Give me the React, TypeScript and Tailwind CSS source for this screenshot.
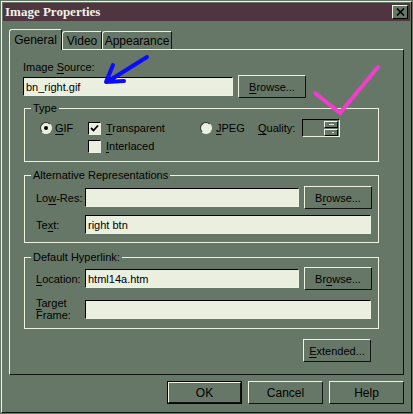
import React from 'react';

// Classic dialog palette
const LIGHT = 'border-[#eef2e0]';

function Btn({ children, w = 'w-[68px]', h = 'h-[23px]', def = false }: { children: React.ReactNode; w?: string; h?: string; def?: boolean }) {
	const inner = (
		<div className={`flex h-full w-full items-center justify-center border-t border-l ${LIGHT} border-r border-b border-r-[#101410] border-b-[#101410]`}>
			{children}
		</div>
	);
	if (def) {
		return <div className={`${w} ${h} border border-black`}>{inner}</div>;
	}
	return <div className={`${w} ${h}`}>{inner}</div>;
}

function Field({ value = '', w }: { value?: string; w: string }) {
	return (
		<div className={`${w} h-[19px] flex items-center bg-[#ebefdf] border-t border-l border-t-black border-l-black border-r border-b ${LIGHT} pl-[2px]`}>
			{value}
		</div>
	);
}

function Radio({ on = false }: { on?: boolean }) {
	return (
		<div className="w-[12px] h-[12px] rounded-full border border-t-[#2a322a] border-l-[#2a322a] border-r-[#eef2e0] border-b-[#eef2e0] bg-[#ebefdf] flex items-center justify-center">
			{on && <div className="w-[4px] h-[4px] rounded-full bg-black" />}
		</div>
	);
}

function Check({ on = false }: { on?: boolean }) {
	return (
		<div className="w-[13px] h-[13px] border-t border-l border-t-black border-l-black border-r border-b border-r-[#eef2e0] border-b-[#eef2e0] bg-[#ebefdf] flex items-center justify-center">
			{on && (
				<svg width="9" height="9" viewBox="0 0 9 9">
					<path d="M1 4 L3.5 6.5 L8 1.5" stroke="#000" strokeWidth="1.8" fill="none" />
				</svg>
			)}
		</div>
	);
}

function U({ children }: { children: React.ReactNode }) {
	return <span className="underline underline-offset-[2px]">{children}</span>;
}

function Group({ title, h, children }: { title: string; h: string; children: React.ReactNode }) {
	return (
		<fieldset className={`ml-[14px] w-[355px] ${h} border ${LIGHT}`}>
			<legend className="ml-[6px] px-[2px] leading-[14px]">{title}</legend>
			{children}
		</fieldset>
	);
}

export default function App() {
	return (
		<div className="relative w-[413px] h-[414px] bg-[#677767] text-[11px] text-black leading-[14px] overflow-hidden" style={{ fontFamily: '"Liberation Sans", Arial, sans-serif' }}>
			<div className={`ml-px mt-px w-[411px] h-[412px] border-t border-l ${LIGHT} border-r border-b border-r-[#101410] border-b-[#101410] flex flex-col`}>
				{/* Title bar */}
				<div className="mx-px mt-px h-[18px] bg-[#4f3540] flex items-center justify-between pl-[2px] pr-[2px]">
					<span className="text-[13px] font-bold text-[#f2f2e6]" style={{ fontFamily: '"Liberation Serif", "Times New Roman", serif' }}>
						Image Properties
					</span>
					<div className={`w-[16px] h-[14px] bg-[#677767] border-t border-l ${LIGHT} border-r border-b border-r-black border-b-black flex items-center justify-center`}>
						<svg width="9" height="8" viewBox="0 0 9 8">
							<path d="M1 0.5 L8 7.5 M8 0.5 L1 7.5" stroke="#000" strokeWidth="1.6" />
						</svg>
					</div>
				</div>

				{/* Tabs */}
				<div className="mt-[8px] pl-[7px] flex items-end h-[20px]">
					<div className={`relative z-10 -mb-px w-[53px] h-[21px] bg-[#677767] border-t border-l ${LIGHT} rounded-tl-[3px] border-r border-r-[#101410] flex items-center justify-center text-[12px]`}>
						General
					</div>
					<div className={`w-[40px] h-[18px] border-t border-l ${LIGHT} rounded-tl-[3px] border-r border-r-[#101410] flex items-center justify-center text-[12px]`}>
						Video
					</div>
					<div className={`w-[70px] h-[18px] border-t border-l ${LIGHT} rounded-tl-[3px] border-r border-r-[#101410] flex items-center justify-center text-[12px]`}>
						Appearance
					</div>
				</div>

				{/* Panel */}
				<div className={`ml-[7px] w-[395px] h-[326px] border-t border-l ${LIGHT} border-r border-b border-r-[#101410] border-b-[#101410] flex flex-col`}>
					<div className="ml-[13px] mt-[10px]">
						Image <U>S</U>ource:
					</div>
					<div className="ml-[13px] mt-px flex items-center h-[23px]">
						<Field w="w-[210px]" value="bn_right.gif" />
						<div className="ml-[5px]">
							<Btn>
								<U>B</U>rowse...
							</Btn>
						</div>
					</div>

					<div className="mt-[3px]">
						<Group title="Type" h="h-[61px]">
							<div className="mt-[6px] pl-[15px] flex items-center h-[14px]">
								<div className="w-[48px] flex items-center">
									<Radio on />
									<span className="ml-[3px]">
										<U>G</U>IF
									</span>
								</div>
								<div className="w-[112px] flex items-center">
									<Check on />
									<span className="ml-[5px]">
										<U>T</U>ransparent
									</span>
								</div>
								<div className="w-[58px] flex items-center">
									<Radio />
									<span className="ml-[4px]">
										<U>J</U>PEG
									</span>
								</div>
								<div className="w-[44px]">
									<U>Q</U>uality:
								</div>
								<div className="w-[38px] h-[18px] border-t border-l border-t-black border-l-black border-r border-b border-r-[#eef2e0] border-b-[#eef2e0] flex flex-col items-end justify-center pr-px gap-px">
									<div className="w-[14px] h-[7px] border border-[#eef2e0] border-r-black border-b-black flex items-center justify-center">
										<div className="w-[5px] h-px bg-[#eef2e0]" />
									</div>
									<div className="w-[14px] h-[7px] border border-[#eef2e0] border-r-black border-b-black flex items-center justify-end pr-[3px]">
										<div className="w-[2px] h-px bg-[#eef2e0]" />
									</div>
								</div>
							</div>
							<div className="mt-[4px] pl-[63px] flex items-center h-[14px]">
								<Check />
								<span className="ml-[5px]">
									<U>I</U>nterlaced
								</span>
							</div>
						</Group>
					</div>

					<div className="mt-[6px]">
						<Group title="Alternative Representations" h="h-[75px]">
							<div className="mt-[4px] pl-[11px] flex items-center h-[23px]">
								<div className="w-[49px]">
									Lo<U>w</U>-Res:
								</div>
								<Field w="w-[214px]" />
								<div className="ml-[5px]">
									<Btn>
										B<U>r</U>owse...
									</Btn>
								</div>
							</div>
							<div className="mt-[6px] pl-[11px] flex items-center h-[19px]">
								<div className="w-[49px]">
									Te<U>x</U>t:
								</div>
								<Field w="w-[286px]" value="right btn" />
							</div>
						</Group>
					</div>

					<div className="mt-[7px]">
						<Group title="Default Hyperlink:" h="h-[79px]">
							<div className="mt-[3px] pl-[11px] flex items-center h-[23px]">
								<div className="w-[49px]">
									<U>L</U>ocation:
								</div>
								<Field w="w-[214px]" value="html14a.htm" />
								<div className="ml-[5px]">
									<Btn>
										Br<U>o</U>wse...
									</Btn>
								</div>
							</div>
							<div className="mt-[7px] pl-[11px] flex items-center h-[24px]">
								<div className="w-[49px] leading-[12px]">
									<U>T</U>arget
									<br />
									Frame:
								</div>
								<Field w="w-[286px]" />
							</div>
						</Group>
					</div>

					<div className="mt-[10px] ml-[293px]">
						<Btn>
							<U>E</U>xtended...
						</Btn>
					</div>
				</div>

				{/* Dialog buttons */}
				<div className="mt-[6px] ml-[165px] flex gap-[6px] text-[12px]">
					<Btn w="w-[75px]" h="h-[23px]" def>
						OK
					</Btn>
					<Btn w="w-[75px]" h="h-[23px]">
						Cancel
					</Btn>
					<Btn w="w-[75px]" h="h-[23px]">
						Help
					</Btn>
				</div>
			</div>

			{/* Hand-drawn annotations */}
			<svg className="pointer-events-none absolute left-0 top-0" width="413" height="414" viewBox="0 0 413 414">
				<path d="M147 57 L107 82 M113 65 L106 82 L124 81" stroke="#0a0aff" strokeWidth="4" fill="none" strokeLinecap="round" strokeLinejoin="round" />
				<path d="M315 93 L340 113 L378 67" stroke="#f23ccc" strokeWidth="4" fill="none" strokeLinecap="round" strokeLinejoin="round" />
			</svg>
		</div>
	);
}
